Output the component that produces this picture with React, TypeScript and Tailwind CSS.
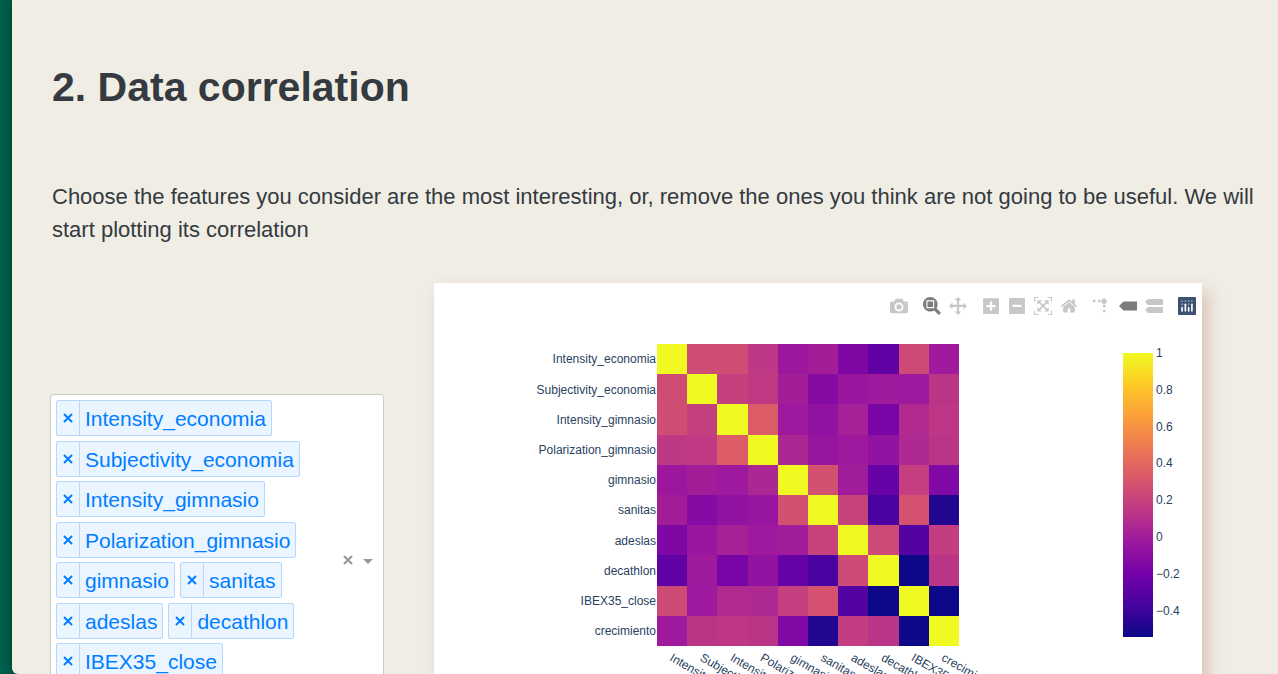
import React from "react";

const features = [
  "Intensity_economia",
  "Subjectivity_economia",
  "Intensity_gimnasio",
  "Polarization_gimnasio",
  "gimnasio",
  "sanitas",
  "adeslas",
  "decathlon",
  "IBEX35_close",
  "crecimiento",
];

const plasma = [
  "#0d0887", "#46039f", "#7201a8", "#9c179e", "#bd3786",
  "#d8576b", "#ed7953", "#fb9f3a", "#fdca26", "#f0f921",
];

/* Upper triangle of the correlation matrix, on the 0-9 scale of the palette. */
const upper = [
  [9, 4.67, 4.7, 4.05, 3, 3.2, 2.3, 1.6, 4.6, 3.1],
  [9, 4.3, 4.1, 3.2, 2.45, 2.95, 3.1, 3.05, 3.95],
  [9, 5.15, 3.05, 2.75, 3.3, 2.2, 3.6, 4],
  [9, 3.5, 2.9, 3.05, 2.75, 3.55, 3.95],
  [9, 4.8, 3.15, 1.75, 4.25, 2.35],
  [9, 4.35, 1.1, 4.85, 0.35],
  [9, 4.6, 1.35, 4.2],
  [9, 0, 3.9],
  [9, 0],
  [9],
];

function level(row: number, col: number) {
  const a = Math.min(row, col);
  const b = Math.max(row, col);
  return upper[a][b - a];
}

function colour(v: number) {
  const i = Math.min(8, Math.floor(v));
  const f = v - i;
  const channel = (s: string, k: number) => parseInt(s.slice(1 + 2 * k, 3 + 2 * k), 16);
  const mix = [0, 1, 2].map((k) =>
    Math.round(channel(plasma[i], k) * (1 - f) + channel(plasma[i + 1], k) * f)
  );
  return `rgb(${mix.join(",")})`;
}

const edges = [0, 30, 60, 91, 121, 151, 181, 211, 242, 272, 302];
const ticks = ["1", "0.8", "0.6", "0.4", "0.2", "0", "−0.2", "−0.4"];

type Tool = { name: string; path: string; box?: string; flip?: string; active?: boolean };

const toolGroups: Tool[][] = [
  [
    {
      name: "Download plot as a png",
      path: "m500 450c-83 0-150-67-150-150 0-83 67-150 150-150 83 0 150 67 150 150 0 83-67 150-150 150z m400 150h-120c-16 0-34 13-39 29l-31 93c-6 15-23 28-40 28h-340c-16 0-34-13-39-28l-31-94c-6-15-23-28-40-28h-120c-55 0-100-45-100-100v-450c0-55 45-100 100-100h800c55 0 100 45 100 100v450c0 55-45 100-100 100z m-400-550c-138 0-250 112-250 250 0 138 112 250 250 250 138 0 250-112 250-250 0-138-112-250-250-250z m365 380c-19 0-35 16-35 35 0 19 16 35 35 35 19 0 35-16 35-35 0-19-16-35-35-35z",
    },
  ],
  [
    {
      name: "Zoom",
      active: true,
      path: "m1000-25l-250 251c40 63 63 138 63 218 0 224-182 406-407 406-224 0-406-182-406-406s183-406 407-406c80 0 155 22 218 62l250-250 125 125z m-812 250l0 438 437 0 0-438-437 0z m62 375l313 0 0-312-313 0 0 312z",
    },
    {
      name: "Pan",
      path: "m1000 350l-187 188 0-125-250 0 0 250 125 0-188 187-187-187 125 0 0-250-250 0 0 125-188-188 186-187 0 125 252 0 0-250-125 0 187-188 188 188-125 0 0 250 250 0 0-126 187 188z",
    },
  ],
  [
    {
      name: "Zoom in",
      box: "0 0 875 1000",
      path: "m1 787l0-875 875 0 0 875-875 0z m687-500l-187 0 0-187-125 0 0 187-188 0 0 125 188 0 0 187 125 0 0-187 187 0 0-125z",
    },
    {
      name: "Zoom out",
      box: "0 0 875 1000",
      path: "m0 788l0-876 875 0 0 876-875 0z m688-500l-500 0 0 125 500 0 0-125z",
    },
    {
      name: "Autoscale",
      path: "m250 850l-187 0-63 0 0-62 0-188 63 0 0 188 187 0 0 62z m688 0l-188 0 0-62 188 0 0-188 62 0 0 188 0 62-62 0z m-875-938l0 188-63 0 0-188 0-62 63 0 187 0 0 62-187 0z m875 188l0-188-188 0 0-62 188 0 62 0 0 62 0 188-62 0z m-125 188l-1 0-93-94-156 156 156 156 92-93 2 0 0 250-250 0 0-2 93-92-156-156-156 156 94 92 0 2-250 0 0-250 0 0 93 93 157-156-157-156-93 94 0 0 0-250 250 0 0 0-94 93 156 157 156-157-93-93 0 0 250 0 0 250z",
    },
    {
      name: "Reset axes",
      box: "0 0 928.6 1000",
      path: "m786 296v-267q0-15-11-26t-25-10h-214v214h-143v-214h-214q-15 0-25 10t-11 26v267q0 1 0 2t0 2l321 264 321-264q1-1 1-4z m124 39l-34-41q-5-5-12-6h-2q-7 0-12 3l-386 322-386-322q-7-4-13-4-7 2-12 7l-35 41q-4 5-3 13t6 12l401 334q18 15 42 15t43-15l136-114v109q0 8 5 13t13 5h107q8 0 13-5t5-13v-227l122-102q5-5 6-12t-4-13z",
    },
  ],
  [
    {
      name: "Toggle spike lines",
      flip: "matrix(1.5 0 0 -1.5 0 850)",
      path: "M512 409c0-57-46-104-103-104-57 0-104 47-104 104 0 57 47 103 104 103 57 0 103-46 103-103z m-327-39l92 0 0 92-92 0z m-185 0l92 0 0 92-92 0z m370-186l92 0 0 93-92 0z m0-184l92 0 0 92-92 0z",
    },
    {
      name: "Show closest data on hover",
      active: true,
      box: "0 0 1500 1000",
      path: "m375 725l0 0-375-375 375-374 0-1 1125 0 0 750-1125 0z",
    },
    {
      name: "Compare data on hover",
      box: "0 0 1125 1000",
      path: "m187 786l0 2-187-188 188-187 0 0 937 0 0 373-938 0z m0-499l0 1-187-188 188-188 0 0 937 0 0 376-938-1z",
    },
  ],
];

function Modebar() {
  return (
    <div className="flex justify-end pt-[10px] pr-[2px]">
      {toolGroups.map((group, g) => (
        <div key={g} className="ml-[7px] flex">
          {group.map((t) => (
            <button
              key={t.name}
              type="button"
              aria-label={t.name}
              className={
                t.active
                  ? "flex size-[26px] items-center justify-center text-[#7c7c7c]"
                  : "flex size-[26px] items-center justify-center text-[#c7c7c7]"
              }
            >
              <svg viewBox={t.box ?? "0 0 1000 1000"} className="size-[18px]" fill="currentColor">
                <path d={t.path} transform={t.flip ?? "matrix(1 0 0 -1 0 850)"} />
              </svg>
            </button>
          ))}
        </div>
      ))}
      <a
        href="https://plotly.com/"
        aria-label="Produced with Plotly"
        className="ml-[7px] flex size-[26px] items-center justify-center"
      >
        <svg viewBox="0 0 132 132" className="size-[18px]">
          <rect width="132" height="132" rx="6" fill="#3f4f75" />
          <g fill="#80cfbe">
            <circle cx="78" cy="54" r="6" />
            <circle cx="102" cy="30" r="6" />
            <circle cx="78" cy="30" r="6" />
            <circle cx="54" cy="30" r="6" />
            <circle cx="30" cy="30" r="6" />
            <circle cx="30" cy="54" r="6" />
          </g>
          <g fill="#fff">
            <path d="M30,72a6,6,0,0,0-6,6v24a6,6,0,0,0,12,0V78A6,6,0,0,0,30,72Z" />
            <path d="M78,72a6,6,0,0,0-6,6v24a6,6,0,0,0,12,0V78A6,6,0,0,0,78,72Z" />
            <path d="M54,48a6,6,0,0,0-6,6v48a6,6,0,0,0,12,0V54A6,6,0,0,0,54,48Z" />
            <path d="M102,48a6,6,0,0,0-6,6v48a6,6,0,0,0,12,0V54A6,6,0,0,0,102,48Z" />
          </g>
        </svg>
      </a>
    </div>
  );
}

function Heatmap() {
  return (
    <svg
      viewBox="0 0 768 460"
      className="block w-full text-[12px]"
      fill="#2a3f5f"
      role="img"
      aria-label="Correlation heatmap"
    >
      <defs>
        <linearGradient id="scale" x1="0" y1="1" x2="0" y2="0">
          {plasma.map((c, i) => (
            <stop key={c} offset={i / 9} stopColor={c} />
          ))}
        </linearGradient>
      </defs>
      <g transform="translate(223 25)" shapeRendering="crispEdges">
        {features.map((_, r) =>
          features.map((_, c) => (
            <rect
              key={`${r}-${c}`}
              x={edges[c]}
              y={edges[r]}
              width={edges[c + 1] - edges[c]}
              height={edges[r + 1] - edges[r]}
              fill={colour(level(r, c))}
            />
          ))
        )}
      </g>
      {features.map((f, i) => (
        <text key={f} x="222" y={44 + Math.ceil(i * 30.2)} textAnchor="end">
          {f}
        </text>
      ))}
      {features.map((f, i) => (
        <text key={f} transform={`translate(${235 + i * 30.2} 341) rotate(30)`}>
          {f}
        </text>
      ))}
      <rect x="689" y="34" width="30" height="284" fill="url(#scale)" />
      {ticks.map((t, i) => (
        <text key={t} x="722" y={38 + i * 36.8}>
          {t}
        </text>
      ))}
    </svg>
  );
}

function FeatureSelect() {
  return (
    <div className="flex w-[334px] shrink-0 items-center rounded-[4px] border border-[#cccccc] bg-white p-[5px]">
      <ul className="flex h-[320px] flex-1 flex-wrap content-between gap-x-[5px]">
        {features.map((f) => (
          <li
            key={f}
            className="flex h-[36px] rounded-[2px] border border-[#b3d7ff] bg-[#ebf5ff] text-[21px] leading-[36px] text-[#007eff]"
          >
            <button
              type="button"
              aria-label={`Remove ${f}`}
              className="flex w-[23px] items-center justify-center border-r border-[#b3d7ff]"
            >
              <svg viewBox="0 0 10 10" className="size-[10px]" stroke="currentColor" strokeWidth="2">
                <path d="M1 1 9 9M9 1 1 9" />
              </svg>
            </button>
            <span className="px-[5px]">{f}</span>
          </li>
        ))}
      </ul>
      <button type="button" aria-label="Clear all" className="p-[5px] text-[#999999]">
        <svg viewBox="0 0 10 10" className="size-[10px]" stroke="currentColor" strokeWidth="2.2">
          <path d="M1 1 9 9M9 1 1 9" />
        </svg>
      </button>
      <button type="button" aria-label="Open list" className="p-[5px] pt-[8px] text-[#999999]">
        <svg viewBox="0 0 10 5" className="h-[5px] w-[10px]" fill="currentColor">
          <path d="M0 0H10L5 5Z" />
        </svg>
      </button>
    </div>
  );
}

export default function App() {
  return (
    <div className="h-screen bg-[#005f4b] pl-[12px] font-['Liberation_Sans',Arial,sans-serif] text-[#343a40]">
      <main className="h-full overflow-y-auto rounded-bl-[6px] bg-[#f0ede5] shadow-[0_0_10px_rgba(0,0,0,0.4)] [scrollbar-width:none]">
        <h1 className="px-[40px] pt-[62px] text-[41px] leading-[50px] font-bold">2. Data correlation</h1>
        <p className="px-[40px] pt-[68px] pr-[20px] text-[22px] leading-[33px]">
          Choose the features you consider are the most interesting, or, remove the ones you think
          are not going to be useful. We will start plotting its correlation
        </p>
        <div className="flex items-start gap-[50px] pt-[37px] pr-[76px] pb-[60px] pl-[38px]">
          <div className="pt-[111px]">
            <FeatureSelect />
          </div>
          <section className="min-w-0 flex-1 bg-white shadow-[6px_8px_16px_#dac3b5]">
            <Modebar />
            <Heatmap />
          </section>
        </div>
      </main>
    </div>
  );
}
